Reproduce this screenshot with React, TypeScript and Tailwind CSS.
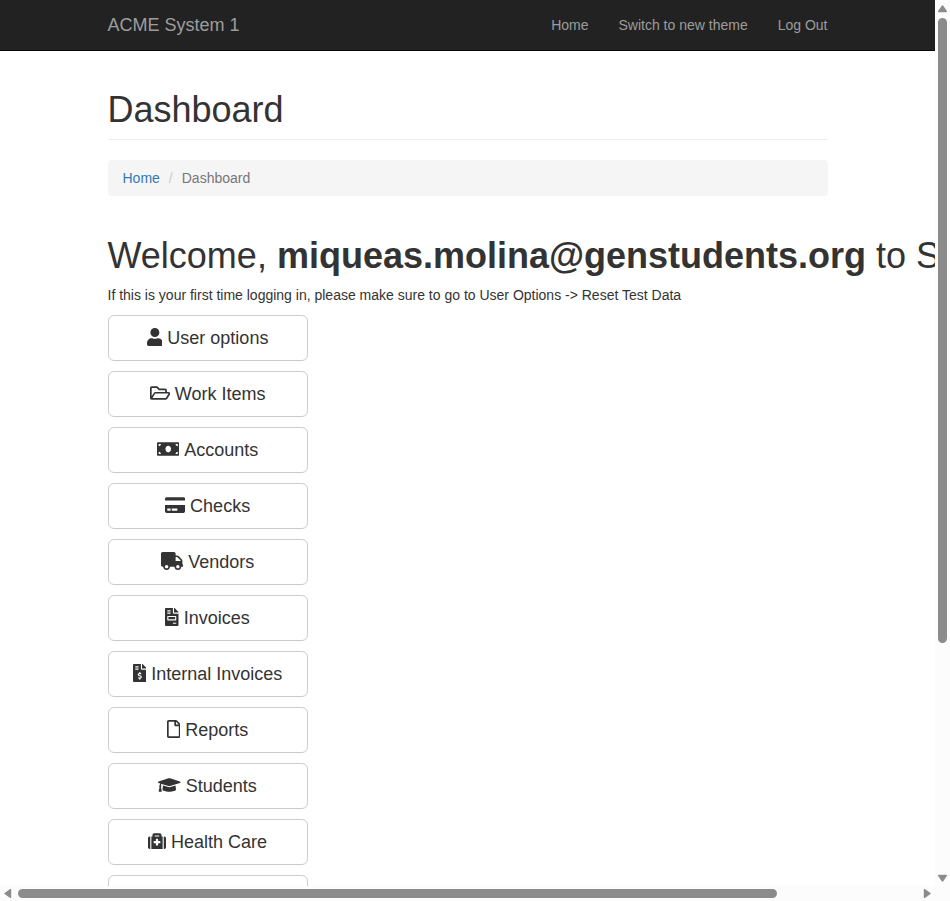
import React from "react";
import type { IconType } from "react-icons";
import {
  FaUser,
  FaRegFolderOpen,
  FaMoneyBill,
  FaCreditCard,
  FaTruck,
  FaFileInvoice,
  FaFileInvoiceDollar,
  FaRegFile,
  FaGraduationCap,
  FaMedkit,
} from "react-icons/fa";

const menu: { label: string; icon: IconType; width: string }[] = [
  { label: "User options", icon: FaUser, width: "w-[15.75px]" },
  { label: "Work Items", icon: FaRegFolderOpen, width: "w-[20.25px]" },
  { label: "Accounts", icon: FaMoneyBill, width: "w-[22.5px]" },
  { label: "Checks", icon: FaCreditCard, width: "w-[20.25px]" },
  { label: "Vendors", icon: FaTruck, width: "w-[22.5px]" },
  { label: "Invoices", icon: FaFileInvoice, width: "w-[13.5px]" },
  { label: "Internal Invoices", icon: FaFileInvoiceDollar, width: "w-[13.5px]" },
  { label: "Reports", icon: FaRegFile, width: "w-[13.5px]" },
  { label: "Students", icon: FaGraduationCap, width: "w-[22.5px]" },
  { label: "Health Care", icon: FaMedkit, width: "w-[18px]" },
];

function Navbar() {
  return (
    <nav className="h-[51px] border-b border-[#080808] bg-[#222] text-[#9d9d9d]">
      <div className="mx-auto flex w-[750px] justify-between">
        <a className="p-[15px] text-[18px] leading-5">ACME System 1</a>
        <div className="flex text-[14px] leading-5">
          <a className="p-[15px]">Home</a>
          <a className="p-[15px]">Switch to new theme</a>
          <a className="p-[15px]">Log Out</a>
        </div>
      </div>
    </nav>
  );
}

function Arrow({ d, className }: { d: string; className: string }) {
  return (
    <svg viewBox="0 0 10 8" className={className} fill="#8b8b8b" stroke="#8b8b8b" strokeWidth="1.4" strokeLinejoin="round">
      <path d={d} />
    </svg>
  );
}

function VerticalScrollbar() {
  return (
    <div className="flex flex-col items-center bg-[#fcfcfc] pt-[5px] pb-1">
      <Arrow d="M4.5 1 L8.3 6.5 H0.7 Z" className="h-2 w-2.5" />
      <div className="mt-[5px] h-[625px] w-[9px] rounded-full bg-[#8b8b8b]" />
      <Arrow d="M4.5 7 L8.3 1.5 H0.7 Z" className="mt-auto h-2 w-2.5" />
    </div>
  );
}

function HorizontalScrollbar() {
  return (
    <div className="flex items-center bg-[#fcfcfc] pr-1 pl-[4px]">
      <svg viewBox="0 0 8 10" className="h-2.5 w-2" fill="#8b8b8b" stroke="#8b8b8b" strokeWidth="1.4" strokeLinejoin="round">
        <path d="M1 4.5 L6.5 0.7 V8.3 Z" />
      </svg>
      <div className="ml-[6px] h-[9px] w-[759px] rounded-full bg-[#8b8b8b]" />
      <svg viewBox="0 0 8 10" className="ml-auto h-2.5 w-2" fill="#8b8b8b" stroke="#8b8b8b" strokeWidth="1.4" strokeLinejoin="round">
        <path d="M7 4.5 L1.5 0.7 V8.3 Z" />
      </svg>
    </div>
  );
}

export default function App() {
  return (
    <div className="grid h-[901px] w-[950px] grid-cols-[935px_15px] grid-rows-[886px_15px] overflow-hidden bg-white font-['Liberation_Sans',Arial,sans-serif] text-[14px] leading-5 text-[#333]">
      <div className="overflow-hidden">
        <Navbar />
        <main className="mx-auto w-[750px] px-[15px]">
          <header className="mt-[39px] mb-5 border-b border-[#eee] pb-2.5">
            <h1 className="text-[36px] leading-[39px] font-medium">Dashboard</h1>
          </header>
          <ol className="mb-5 flex h-9 rounded bg-[#f5f5f5] px-[15px] py-2">
            <li className="text-[#337ab7]">Home</li>
            <li className="px-[9px] text-[#ccc]">/</li>
            <li className="text-[#777]">Dashboard</li>
          </ol>
          <h1 className="mt-10 mb-2.5 text-[36px] leading-[39px] font-medium whitespace-nowrap">
            Welcome, <b>miqueas.molina@genstudents.org</b> to S
          </h1>
          <p className="mb-2.5">
            If this is your first time logging in, please make sure to go to User Options -&gt; Reset Test Data
          </p>
          <div className="flex flex-col gap-2.5">
            {menu.map(({ label, icon: Icon, width }) => (
              <button
                key={label}
                className="flex h-[46px] w-[200px] items-center justify-center gap-[5px] rounded-md border border-[#ccc] bg-white text-[18px] leading-6"
              >
                <Icon className={`mb-[2px] h-[18px] shrink-0 ${width}`} />
                <span>{label}</span>
              </button>
            ))}
            <button className="h-[46px] w-[200px] shrink-0 rounded-md border border-[#ccc] bg-white" />
          </div>
        </main>
      </div>
      <VerticalScrollbar />
      <HorizontalScrollbar />
      <div className="bg-[#fcfcfc]" />
    </div>
  );
}
